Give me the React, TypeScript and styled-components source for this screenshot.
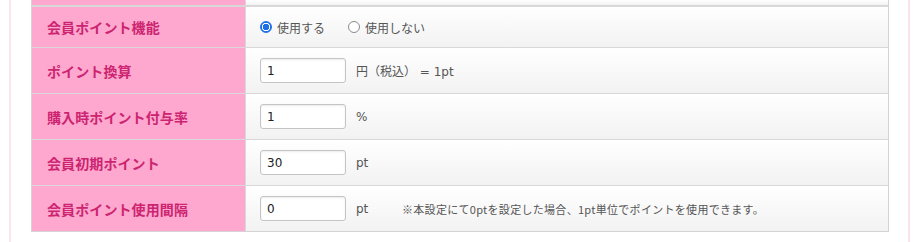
import { Fragment } from "react";
import styled, { createGlobalStyle } from "styled-components";

const GlobalStyle = createGlobalStyle`
  html, body {
    margin: 0;
    padding: 0;
    background: #ffffff;
  }
  body {
    font-family: "DejaVu Sans", "Noto Sans CJK JP", sans-serif;
    color: #444;
  }
`;

const Frame = styled.div`
  width: 858px;
  height: 242px;
  margin-left: 9px;
  padding: 0 19px 0 20px;
  border-left: 2px solid #fbe6ee;
  border-right: 2px solid #fbe3ec;
  background: #fff;
`;

const Table = styled.div`
  display: grid;
  grid-template-columns: 214px 1fr;
  border-left: 1px solid #d4d4d4;
  border-right: 1px solid #d4d4d4;
  border-bottom: 1px solid #d4d4d4;
`;

type RowProps = { $height: number; $border: number };

const Head = styled.div<RowProps>`
  height: ${(p) => p.$height}px;
  background: #fea8cf;
  border-top: ${(p) => p.$border}px solid #d8d8d8;
  border-right: 1px solid #d8d8d8;
  display: flex;
  align-items: center;
  padding-left: 15px;
  font-family: "Noto Sans CJK JP", sans-serif;
  font-size: 14px;
  font-weight: 700;
  color: #cc2470;
  letter-spacing: 0.1px;
`;

const Cell = styled.div<RowProps>`
  height: ${(p) => p.$height}px;
  border-top: ${(p) => p.$border}px solid #d8d8d8;
  background: linear-gradient(#ffffff, #f2f2f2);
  display: flex;
  align-items: center;
  padding-left: 14px;
  font-family: "DejaVu Sans", "Noto Sans CJK JP", sans-serif;
  font-size: 12px;
  color: #555;
`;

const RadioLabel = styled.label`
  display: flex;
  align-items: center;
  gap: 5px;
  margin-right: 23px;
  font-family: "Noto Sans CJK JP", sans-serif;
  font-size: 12px;
  color: #555;
`;

const RadioMark = styled.span<{ $checked?: boolean }>`
  width: 12px;
  height: 12px;
  box-sizing: border-box;
  border-radius: 50%;
  border: 1px solid ${(p) => (p.$checked ? "#1f6fe6" : "#8a8a8a")};
  background: ${(p) =>
    p.$checked
      ? "radial-gradient(circle, #1f6fe6 0 3px, #fff 3.5px 4px, #1f6fe6 4.5px)"
      : "#fff"};
`;

const Input = styled.div`
  width: 86px;
  height: 25px;
  box-sizing: border-box;
  border: 1px solid #c4c4c4;
  border-radius: 3px;
  background: #fff;
  box-shadow: inset 0 1px 2px rgba(0, 0, 0, 0.08);
  display: flex;
  align-items: center;
  padding-left: 6px;
  font-family: "DejaVu Sans", sans-serif;
  font-size: 12px;
  color: #222;
`;

const Unit = styled.span`
  margin-left: 10px;
  min-width: 46px;
  font-family: "DejaVu Sans", "Noto Sans CJK JP", sans-serif;
  font-size: 12px;
  color: #555;
`;

const Note = styled.span`
  font-family: "Noto Sans CJK JP", sans-serif;
  font-size: 11px;
  letter-spacing: 0.3px;
  color: #555;
`;

const rows = [
  { label: "ポイント換算", value: "1", unit: "円（税込） = 1pt" },
  { label: "購入時ポイント付与率", value: "1", unit: "%" },
  { label: "会員初期ポイント", value: "30", unit: "pt" },
  {
    label: "会員ポイント使用間隔",
    value: "0",
    unit: "pt",
    note: "※本設定にて0ptを設定した場合、1pt単位でポイントを使用できます。",
  },
];

export default function App() {
  return (
    <>
      <GlobalStyle />
      <Frame>
        <Table>
          <Head $height={5} $border={0} />
          <Cell $height={5} $border={0} />

          <Head $height={40} $border={2}>
            会員ポイント機能
          </Head>
          <Cell $height={40} $border={2}>
            <RadioLabel>
              <RadioMark $checked />
              使用する
            </RadioLabel>
            <RadioLabel>
              <RadioMark />
              使用しない
            </RadioLabel>
          </Cell>

          {rows.map((r) => (
            <Fragment key={r.label}>
              <Head $height={45} $border={1}>
                {r.label}
              </Head>
              <Cell $height={45} $border={1}>
                <Input>{r.value}</Input>
                <Unit>{r.unit}</Unit>
                {r.note && <Note>{r.note}</Note>}
              </Cell>
            </Fragment>
          ))}
        </Table>
      </Frame>
    </>
  );
}
